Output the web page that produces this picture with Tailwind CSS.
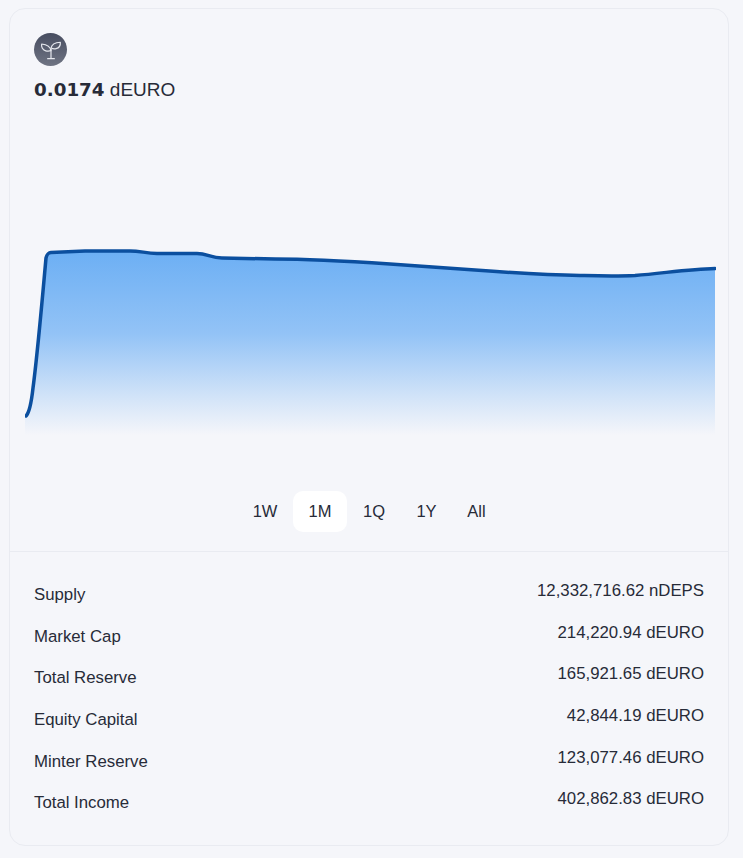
<!DOCTYPE html>
<html lang="en">
<head>
    <meta charset="UTF-8">
    <title>dEURO</title>
    <script src="https://cdn.jsdelivr.net/npm/@tailwindcss/browser@4"></script>
</head>
<body class="bg-[#f5f6fa] font-['Liberation_Sans',Arial,sans-serif] text-[#272b38]">
    <div class="pt-[8px] pl-[9px] pr-[14px] pb-[12px] h-[858px]">
        <div class="h-[838px] border border-[#e9ebf1] rounded-[16px] flex flex-col">
            <div class="pt-[24px] px-[24px]">
                <div class="w-[33px] h-[33px] rounded-full bg-gradient-to-b from-[#474d60] to-[#6f7483] flex items-center justify-center">
                    <svg width="32" height="32" viewBox="0 0 24 24" fill="none" stroke="#e6e8ee" stroke-width="0.9" stroke-linejoin="round" stroke-linecap="round">
                        <path d="M12 18V11.5"/>
                        <path d="M12 12.5C11.5 9.5 9.5 8 5 7.5C4.6 9.5 5.500 12 8 12.6C9.5 13 11 12.8 12 12.5Z"/>
                        <path d="M12 10.5C12.5 8 14.5 6.5 19 6.2C19.2 8.5 18 10.5 15.8 11C14.5 11.3 13 11 12 10.5Z"/>
                        <path d="M9.5 18.5H14.5"/>
                    </svg>
                </div>
                <div class="mt-[11px] text-[19px] leading-[26px]"><span class="font-bold font-['DejaVu_Sans',sans-serif] text-[18.300px]">0.0174</span> dEURO</div>
            </div>
            <div class="mt-[139px] ml-[15px] h-[220px]">
                <svg width="691" height="220" viewBox="0 0 691 220">
                    <defs>
                        <linearGradient id="area" x1="0" y1="0" x2="0" y2="1">
                            <stop offset="0" stop-color="#6cafF4"/>
                            <stop offset="0.45" stop-color="#93c3f6"/>
                            <stop offset="0.8" stop-color="#d3e4f8"/>
                            <stop offset="1" stop-color="#f5f6fa"/>
                        </linearGradient>
                    </defs>
                    <path fill="url(#area)" d="M0 153C5 150 7 143 9 125C13 95 17 40 21 -5C22 -9 23 -10 26 -10.500L60 -12L105 -12L130 -9.500L172 -9.500L195 -5L250 -4L310 -2.500L365 1L450 7L530 12L600 13L650 8L690 5.500V172H0Z" transform="translate(0 21)"/>
                    <path fill="none" stroke="#0b4f9f" stroke-width="3.500" stroke-linecap="round" stroke-linejoin="round" d="M1 153C4 150 6 143 8 125C12 95 17 40 21 -5C22 -9 23 -10 26 -10.500L60 -12L105 -12C115 -12 120 -10 132 -9.500L172 -9.500C182 -9.500 186 -5 197 -5L250 -4C290 -4 320 -2 365 1L450 7C490 10 520 12 555 12.500C575 13 590 13.500 610 12.500C640 10 665 6 690 5.500" transform="translate(0 21)"/>
                </svg>
            </div>
            <div class="mt-[29px] flex justify-center text-[16.500px] leading-[41px] h-[41px]">
                <button class="w-[56px] text-center">1W</button>
                <button class="w-[54px] text-center bg-white rounded-[10px]">1M</button>
                <button class="w-[54px] text-center">1Q</button>
                <button class="w-[51px] text-center">1Y</button>
                <button class="w-[49px] text-center">All</button>
            </div>
            <div class="mt-[19px] border-t border-[#e9ebf1] pt-[22px] px-[24px] flex flex-col text-[16.800px] leading-[24px]">
                <div class="flex justify-between h-[41.700px]"><span class="pt-[9px]">Supply</span><span class="pt-[5px]">12,332,716.62 nDEPS</span></div>
                <div class="flex justify-between h-[41.700px]"><span class="pt-[9px]">Market Cap</span><span class="pt-[5px]">214,220.94 dEURO</span></div>
                <div class="flex justify-between h-[41.700px]"><span class="pt-[9px]">Total Reserve</span><span class="pt-[5px]">165,921.65 dEURO</span></div>
                <div class="flex justify-between h-[41.700px]"><span class="pt-[9px]">Equity Capital</span><span class="pt-[5px]">42,844.19 dEURO</span></div>
                <div class="flex justify-between h-[41.700px]"><span class="pt-[9px]">Minter Reserve</span><span class="pt-[5px]">123,077.46 dEURO</span></div>
                <div class="flex justify-between h-[41.700px]"><span class="pt-[9px]">Total Income</span><span class="pt-[5px]">402,862.83 dEURO</span></div>
            </div>
        </div>
    </div>
</body>
</html>
